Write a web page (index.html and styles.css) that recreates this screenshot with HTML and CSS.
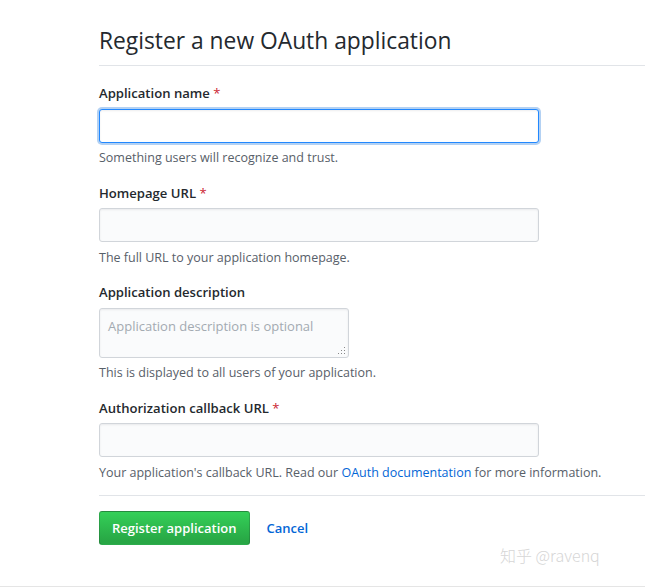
FILE: index.html
```html
<!DOCTYPE html>
<html lang="en">

<head>
   <meta charset="UTF-8">
   <meta name="viewport" content="width=device-width, initial-scale=1.0">
   <title>Register a new OAuth application</title>
   <link rel="stylesheet" href="styles.css">
</head>

<body>
   <div class="page">
      <h2 class="subhead">Register a new OAuth application</h2>

      <form class="oauth-form">
         <dl class="form-group">
            <dt><label>Application name <span class="required">*</span></label></dt>
            <dd>
               <input type="text" class="form-control focused">
               <p class="note">Something users will recognize and trust.</p>
            </dd>
         </dl>

         <dl class="form-group">
            <dt><label>Homepage URL <span class="required">*</span></label></dt>
            <dd>
               <input type="text" class="form-control">
               <p class="note">The full URL to your application homepage.</p>
            </dd>
         </dl>

         <dl class="form-group">
            <dt><label>Application description</label></dt>
            <dd>
               <div class="textarea-wrap">
                  <textarea class="form-control short" placeholder="Application description is optional"></textarea>
                  <!-- 크기조절 손잡이 -->
                  <svg class="grip" width="8" height="8" viewBox="0 0 8 8">
                     <rect x="6" y="0" width="1" height="1" fill="#888"/>
                     <rect x="3" y="3" width="1" height="1" fill="#888"/>
                     <rect x="6" y="3" width="1" height="1" fill="#888"/>
                     <rect x="0" y="6" width="1" height="1" fill="#888"/>
                     <rect x="3" y="6" width="1" height="1" fill="#888"/>
                     <rect x="6" y="6" width="1" height="1" fill="#888"/>
                  </svg>
               </div>
               <p class="note">This is displayed to all users of your application.</p>
            </dd>
         </dl>

         <dl class="form-group">
            <dt><label>Authorization callback URL <span class="required">*</span></label></dt>
            <dd>
               <input type="text" class="form-control">
               <p class="note">Your application's callback URL. Read our <a href="#">OAuth documentation</a> for more information.</p>
            </dd>
         </dl>

         <div class="form-actions">
            <button type="button" class="btn-primary">Register application</button>
            <a href="#" class="cancel">Cancel</a>
         </div>
      </form>

      <div class="watermark">知乎 @ravenq</div>
   </div>
</body>

</html>
```

FILE: styles.css
```css
* {
   margin: 0;
   padding: 0;
   box-sizing: border-box;
}

body {
   font-family: 'Open Sans', 'Noto Sans', 'Noto Sans CJK SC', sans-serif;
   font-size: 14px;
   color: #24292e;
   background: #fff;
   width: 645px;
   height: 587px;
   overflow: hidden;
}

.page {
   padding-left: 99px;
   height: 587px;
   border-bottom: 1px solid #e5e5e5;
   position: relative;
}

.subhead {
   font-size: 22.8px;
   font-weight: normal;
   line-height: 30px;
   padding-top: 26px;
   padding-bottom: 9px;
   border-bottom: 1px solid #e1e4e8;
}

.oauth-form {
   padding-top: 15px;
}

.form-group {
   margin-bottom: 12.5px;
}

.form-group dt label {
   font-weight: 600;
   font-size: 13.1px;
   line-height: 24px;
}

.required {
   color: #cb2431;
   font-weight: normal;
}

.form-group dd {
   padding-top: 3.5px;
}

.form-control {
   display: block;
   width: 440px;
   height: 34px;
   background: #fafbfc;
   border: 1px solid #d1d5da;
   border-radius: 3px;
   box-shadow: inset 0 1px 2px rgba(27, 31, 35, 0.075);
   font-family: inherit;
   font-size: 14px;
   padding: 6px 8px;
   outline: none;
}

.focused {
   background: #fff;
   border-color: #2188ff;
   box-shadow: inset 0 1px 2px rgba(27, 31, 35, 0.075), 0 0 0 2px rgba(3, 102, 214, 0.3);
}

.textarea-wrap {
   position: relative;
   width: 250px;
}

.short {
   width: 250px;
   height: 50px;
   resize: none;
   padding: 7px 8px;
   line-height: 20px;
   font-size: 13px;
}

.short::placeholder {
   color: #a3aab1;
}

.grip {
   position: absolute;
   right: 3px;
   bottom: 3px;
}

.note {
   font-size: 12.5px;
   color: #586069;
   line-height: 20px;
   margin-top: 5.5px;
}

.note a {
   color: #0366d6;
   text-decoration: none;
}

.form-actions {
   margin-top: 10px;
   padding-top: 15px;
   border-top: 1px solid #e1e4e8;
   display: flex;
   align-items: center;
}

.btn-primary {
   font-family: inherit;
   font-size: 13px;
   font-weight: 600;
   color: #fff;
   background: linear-gradient(-180deg, #34d058 0%, #28a745 90%);
   border: 1px solid rgba(27, 31, 35, 0.2);
   border-radius: 3px;
   height: 34px;
   padding: 0 12px;
   cursor: pointer;
}

.cancel {
   margin-left: 17px;
   font-size: 13px;
   color: #0366d6;
   font-weight: 600;
   text-decoration: none;
}

.watermark {
   position: absolute;
   left: 500px;
   top: 543px;
   font-size: 16px;
   color: #d6d6d6;
   font-family: 'Noto Sans CJK SC', sans-serif;
   font-weight: 300;
}
```
